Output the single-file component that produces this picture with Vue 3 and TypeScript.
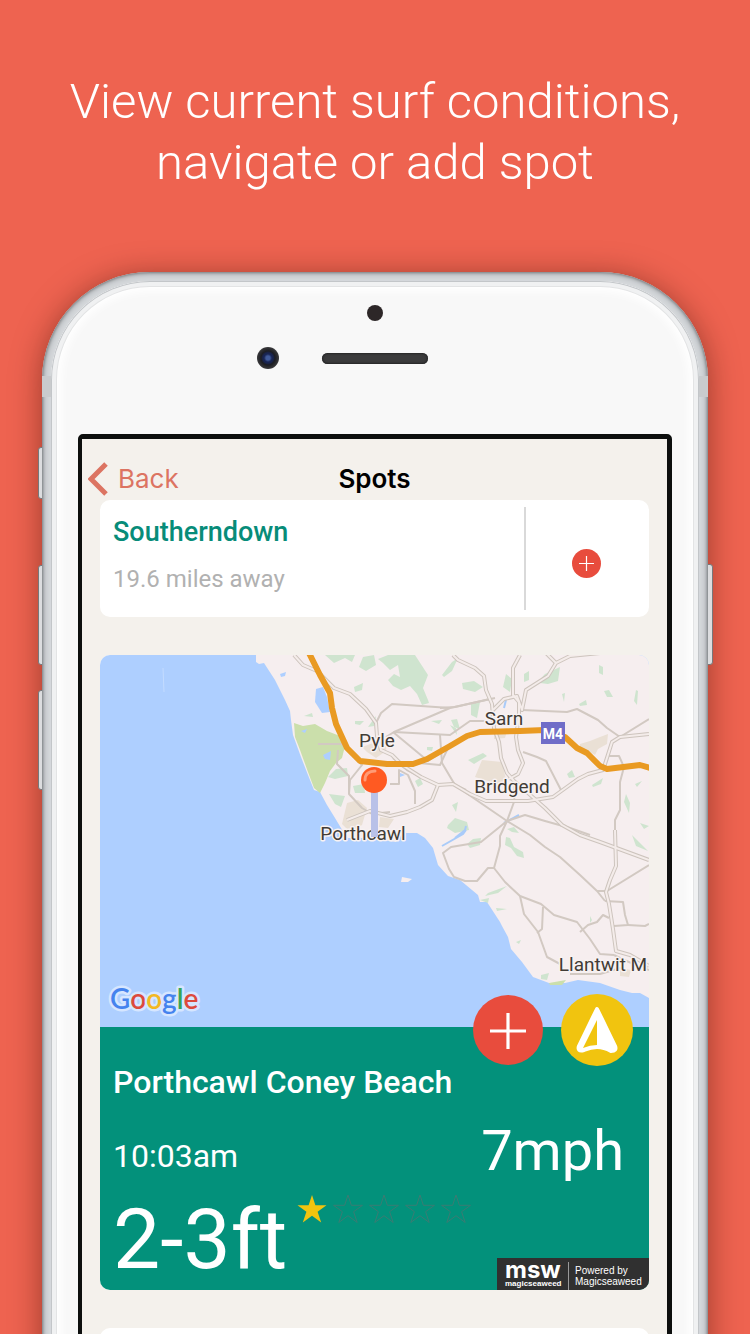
<script setup lang="ts">
interface Label {
  name: string
  x: number
  y: number
}

const labels: Label[] = [
  { name: 'Pyle', x: 377, y: 747 },
  { name: 'Sarn', x: 504, y: 725 },
  { name: 'Bridgend', x: 512, y: 793 },
  { name: 'Porthcawl', x: 363, y: 840 },
  { name: 'Llantwit M', x: 603, y: 971 },
]

const googleLetters = [
  { char: 'G', color: '#4583ee' },
  { char: 'o', color: '#dc4a3d' },
  { char: 'o', color: '#f3b823' },
  { char: 'g', color: '#4583ee' },
  { char: 'l', color: '#37a457' },
  { char: 'e', color: '#dc4a3d' },
]

const rating = 1
const maxRating = 5

const mainRoads: string[] = [
  'M294 655L303 665L317 671L327 681L334 688L350 694L366 709L376 723L377 736L381 750L392 755L402 765L421 777L438 785L453 784L470 794L486 801L528 801L553 797L578 779L588 774L603 770L606 761L612 742L620 737L649 734',
  'M453 655L458 660L475 668L484 676L486 690L492 704L494 728L499 742L501 758L507 773L514 781L528 793L545 808L562 825L580 835L600 842L649 860',
  'M520 655L513 668L513 695L519 702L519 715L516 737L518 750L523 763L518 774L509 779',
  'M493 710L504 699L517 696L522 710L526 690L548 676L556 663L570 656L610 652',
  'M556 663L545 652',
  'M347 820L370 811L390 816L407 812L420 807L432 800L438 785',
  'M615 830L616 866L610 880L606 892L609 904L613 929L616 951L630 955L649 966',
]

const minorRoads: string[] = [
  'M376 723L381 713L392 704L450 708L490 699',
  'M450 708L394 732L386 737',
  'M394 732L450 735L470 721L486 721',
  'M393 732L428 761L455 744',
  'M318 744L342 744L350 753L362 765L350 780L349 794',
  'M338 750L337 764L349 776L349 794L362 808L372 814L390 812',
  'M390 784L399 784L399 770L408 775L415 791L415 804',
  'M440 735L442 763L455 785L466 790',
  'M419 763L440 765L448 748',
  'M438 785L407 770L393 758',
  'M440 708L455 707L495 698',
  'M522 710L567 712L577 709L598 720L607 728L620 737L649 719',
  'M523 752L537 757L546 761L562 792',
  'M606 756L619 756L624 767L620 782L620 810L615 820L615 840',
  'M453 784L507 821L530 835L545 847L560 857L580 875L597 891L605 901',
  'M515 781L514 802L507 821L481 842L451 847L443 853L449 869L454 877L465 881L477 881L488 868L494 868L500 846L500 836L507 821',
  'M507 821L525 815L545 821L570 828L590 835',
  'M494 868L505 882L520 896L541 904L554 915L577 922L590 939L600 954L614 955',
  'M520 896L524 914L538 932L547 957L560 964',
  'M543 907L542 929L537 933',
  'M580 932L588 925L597 922L603 915L609 918',
  'M597 891L607 891L649 865',
  'M605 901L623 902L625 915L628 925L614 926',
  'M628 925L645 926L649 924',
  'M614 955L624 960L649 970M570 974L600 974L624 967',
]
</script>

<template>
  <main class="promo">
    <h1 class="headline">View current surf conditions,<br />navigate or add spot</h1>

    <div class="phone">
      <i class="key key-mute"></i>
      <i class="key key-up"></i>
      <i class="key key-down"></i>
      <i class="key key-power"></i>
      <div class="rim">
        <div class="face">
          <div class="sensors">
            <i class="proximity"></i>
            <div class="ear-row">
              <i class="camera"></i>
              <i class="speaker"></i>
            </div>
          </div>

          <div class="screen">
            <header class="nav">
              <button type="button" class="back">
                <svg width="20" height="34" viewBox="0 0 20 34" aria-hidden="true">
                  <path d="M18 2L3 17L18 32" fill="none" stroke="currentColor" stroke-width="5" />
                </svg>
                Back
              </button>
              <h2 class="nav-title">Spots</h2>
            </header>

            <div class="list">
              <article class="card spot">
                <div class="spot-text">
                  <h3 class="spot-name">Southerndown</h3>
                  <p class="spot-distance">19.6 miles away</p>
                </div>
                <div class="spot-action">
                  <button type="button" class="add-small" aria-label="Add Southerndown">
                    <svg width="29" height="29" viewBox="0 0 29 29">
                      <circle cx="14.5" cy="14.5" r="14.5" fill="#e84c3d" />
                      <path d="M7 14.5H22M14.5 7V22" stroke="#fff" stroke-width="1.2" />
                    </svg>
                  </button>
                </div>
              </article>

              <article class="card detail">
                <svg class="map" viewBox="100 655 549 372" role="img" aria-label="Map of Porthcawl">
                  <rect x="100" y="655" width="549" height="372" fill="#aecfff" />
                  <path
                    fill="#f6eeef"
                    d="M256 655V662L259 664L264 663L275 680L285 700L290 711L291 720L293 735L301 757L308 775L314 790L320 792L327 805L335 818L344 833L348 838L362 838L384 840L396 842L402 833L417 833L425 838L433 848L438 865L448 876L460 880L478 895L480 902L487 902L500 922L502 926L508 937L511 949L522 962L533 977L549 983L565 983L578 980L600 983L620 990L632 993L640 993L649 998V655Z"
                  />
                  <path fill="#f6eeef" d="M402 877L412 879L408 882L401 882Z" />
                  <path stroke="#c4dcff" fill="none" d="M163 668L164 692" />

                  <g fill="#cbdfab">
                    <path d="M294 723L303 726L315 724L327 731L340 736L345 746L342 758L336 763L330 771L325 783L320 793L314 788L308 772L300 750L295 737Z" />
                    <path d="M549 983L566 980L562 985L550 985Z" />
                  </g>
                  <g fill="#cfe4cf">
                    <path d="M325 655H355L352 662L345 658L334 663ZM363 657L374 655L376 665L366 671L359 667ZM378 659L388 655H415L428 675L423 688L428 700L429 703L422 705L417 694L410 686L401 690L393 686L388 680L394 674L400 677L398 665L390 670L383 663Z" />
                    <path d="M354 687L363 683L362 690L355 692ZM355 721L364 721L360 725L355 724ZM304 716L312 713L313 717ZM368 727L373 720L376 716L374 726ZM427 747L433 747L432 751L427 750ZM431 721L442 720L439 724Z" />
                    <path d="M328 777L336 769L347 768L348 776L335 779ZM353 786L364 784L365 793L355 793ZM329 794L345 796L341 807L335 804ZM415 781L420 778L423 784L418 787Z" />
                    <path d="M442 675L452 662L458 658L452 671L444 677ZM462 683L474 681L483 687L475 692L463 689ZM506 674L512 679L510 692L503 687ZM524 674L529 671L529 680L524 682ZM536 684L545 674L560 667L558 681L548 684L540 683ZM599 665L603 667L603 675L599 673ZM471 704L480 702L477 718L471 715ZM451 720L457 719L460 729L454 727Z" />
                    <path d="M604 691L609 690L613 697L607 697ZM636 690L638 691L637 705L634 701ZM579 704L586 700L587 705L580 706ZM562 694L565 693L564 702ZM450 725L456 728L457 735ZM468 760L483 753L487 756L474 764ZM567 774L572 770L575 777L569 778ZM592 785L603 778L601 784L593 787Z" />
                    <path d="M448 825L455 818L467 822L469 830L455 833L447 828ZM452 805L458 802L456 812ZM467 844L473 839L481 838L480 845L470 848ZM506 837L510 838L514 847L523 852L524 858L517 856L511 848L505 845ZM507 829L514 827L519 833L512 832ZM632 835L648 851L636 846ZM635 784L642 781L637 787ZM626 794L630 803L629 813L624 802ZM640 823L649 826L644 829ZM488 893L507 886L498 893L485 896ZM480 900L489 898L488 903ZM496 908L507 909L497 911ZM516 942L521 940L519 944ZM590 916L592 920L590 923ZM541 975L549 973L547 980L541 979ZM573 976L575 985Z" />
                  </g>
                  <g fill="#eae0d5">
                    <path d="M362 747L376 742L387 740L386 751L376 758L367 752Z" />
                    <path d="M347 803L358 800L367 808L362 825L350 832L342 824ZM380 817L394 819L388 828L379 827Z" />
                    <path d="M482 760L502 762L506 780L498 784L475 777ZM494 730L508 728L505 738L494 739Z" />
                    <path d="M580 744L590 741L600 737L608 734L607 744L598 749L595 755L588 751L580 749ZM540 732L550 730L551 740ZM620 968L631 970L629 977L620 976Z" />
                  </g>
                  <g fill="#aecfff">
                    <path d="M316 689L323 687L327 697L330 712L322 713L315 702Z" />
                    <path d="M280 674L286 672L285 676L281 677ZM323 755L331 751L330 760L325 759ZM301 731L307 729L305 733ZM400 773L405 775L400 777Z" />
                  </g>
                  <path d="M455 838L465 830L466 826M504 823L519 815M504 708L506 700M442 846L463 834L466 830" fill="none" stroke="#a9cbf9" stroke-width="2" />

                  <g fill="none" stroke="#d2c9c2" stroke-width="2" stroke-linejoin="round">
                    <path v-for="d in minorRoads" :key="d" :d="d" />
                  </g>
                  <g fill="none" stroke="#cdc4bd" stroke-width="4" stroke-linejoin="round">
                    <path v-for="d in mainRoads" :key="d" :d="d" />
                  </g>
                  <g fill="none" stroke="#f4ecea" stroke-width="2" stroke-linejoin="round">
                    <path v-for="d in mainRoads" :key="d" :d="d" />
                  </g>

                  <path
                    fill="none"
                    stroke="#e99a22"
                    stroke-width="6"
                    stroke-linejoin="round"
                    d="M309 653L320 675L330 693L332 708L336 724L347 748L360 761L387 764L413 764L427 759L450 746L467 736L480 732L520 731L545 730L565 737L577 748L587 753L600 766L607 769L640 765L650 768"
                  />

                  <g class="place">
                    <text v-for="l in labels" :key="l.name" :x="l.x" :y="l.y">{{ l.name }}</text>
                  </g>

                  <rect x="541" y="722" width="24" height="22" fill="#706dc8" />
                  <text class="shield" x="553" y="739">M4</text>

                  <rect x="371" y="790" width="7" height="47" fill="#b9c1e8" />
                  <circle cx="374" cy="780" r="13" fill="#ff5a22" />
                  <path d="M365 780C365 774 369 771 375 771" fill="none" stroke="#ff9b76" stroke-width="3" stroke-linecap="round" />

                  <text class="google" x="110" y="1009">
                    <tspan v-for="(g, i) in googleLetters" :key="i" :fill="g.color">{{ g.char }}</tspan>
                  </text>
                </svg>

                <div class="panel">
                  <div class="fabs">
                    <button type="button" class="fab" aria-label="Add spot">
                      <svg width="70" height="70" viewBox="0 0 70 70">
                        <circle cx="35" cy="35" r="35" fill="#e84c3d" />
                        <path d="M17 36H53M35 18V54" stroke="#fff" stroke-width="3.2" />
                      </svg>
                    </button>
                    <button type="button" class="fab" aria-label="Navigate to spot">
                      <svg width="72" height="72" viewBox="0 0 72 72">
                        <circle cx="36" cy="36" r="36" fill="#f1c40f" />
                        <path d="M36 15L54 52Q56 57 50 57Q43 53 36 53Q30 53 23 56Q16 58 18 52Z" fill="#fff" stroke="#fff" stroke-width="4" stroke-linejoin="round" />
                        <path d="M36 26V51Q29 51 22 54Z" fill="#f1c40f" />
                      </svg>
                    </button>
                  </div>

                  <h3 class="beach">Porthcawl Coney Beach</h3>
                  <div class="row">
                    <time class="time" datetime="10:03">10:03am</time>
                    <span class="wind">7mph</span>
                  </div>
                  <div class="surf">
                    <span class="height">2-3ft</span>
                    <div class="stars" role="img" :aria-label="`${rating} of ${maxRating} stars`">
                      <svg
                        v-for="n in maxRating"
                        :key="n"
                        :class="n <= rating ? 'star on' : 'star'"
                        width="30"
                        height="30"
                        viewBox="0 0 30 30"
                      >
                        <path d="M15 1L18.4 11.3H29.5L20.6 17.7L24.2 28.5L15 21.7L5.8 28.5L9.4 17.7L0.5 11.3H11.6Z" />
                      </svg>
                    </div>
                  </div>

                  <a href="#" class="credit">
                    <span class="logo">
                      <b class="logo-mark">msw</b>
                      <span class="logo-name">magicseaweed</span>
                    </span>
                    <span class="credit-text">Powered by<br />Magicseaweed</span>
                  </a>
                </div>
              </article>

              <article class="card upcoming"></article>
            </div>
          </div>
        </div>
      </div>
    </div>
  </main>
</template>

<style>
body {
  background: #ee6350;
}
</style>

<style scoped>
.promo {
  box-sizing: border-box;
  height: 100vh;
  overflow: hidden;
  padding: 71px 42px 0;
  background: #ee6350;
  font-family: Roboto, "Liberation Sans", sans-serif;
}

h1, h2, h3, p {
  margin: 0;
}

button {
  padding: 0;
  border: 0;
  background: none;
  font: inherit;
  cursor: pointer;
}

svg {
  display: block;
}

.headline {
  height: 201px;
  margin: 0 -20px;
  color: #fff;
  font-size: 49px;
  font-weight: 300;
  line-height: 61px;
  text-align: center;
}

.phone {
  position: relative;
  border-radius: 108px 108px 0 0;
  box-shadow: 0 4px 30px rgba(70, 20, 10, 0.5);
}

.key {
  position: absolute;
  left: -4px;
  width: 5px;
  box-sizing: border-box;
  border: 1px solid #77787b;
  border-radius: 3px 0 0 3px;
  background: #dcdddf;
}

.key-mute {
  top: 175px;
  height: 52px;
}

.key-up {
  top: 293px;
  height: 100px;
}

.key-down {
  top: 418px;
  height: 100px;
}

.key-power {
  top: 292px;
  right: -5px;
  left: auto;
  width: 6px;
  height: 101px;
  border-radius: 0 3px 3px 0;
}

.rim {
  position: relative;
  padding: 9px 9px 0;
  border-radius: 108px 108px 0 0;
  background: #d6d9dc;
  box-shadow: inset 0 0 3px 1px #7b7e81, inset 0 0 6px 3px #b4b8bb;
}

.rim::before {
  content: "";
  position: absolute;
  top: 104px;
  right: 0;
  left: 0;
  height: 21px;
  background: #c9cbcd;
}

.face {
  position: relative;
  padding: 0 27px;
  border-radius: 99px 99px 0 0;
  background: #f8f8f8;
  box-shadow: inset 0 0 0 1px #c3c6c9, inset 0 0 0 5px #f0f1f2, inset 0 0 0 6px #e3e4e5, inset 0 0 10px 10px #fff;
}

.sensors {
  height: 153px;
  display: flex;
  flex-direction: column;
  align-items: center;
  padding-top: 24px;
  box-sizing: border-box;
}

.proximity {
  width: 16px;
  height: 16px;
  border-radius: 50%;
  background: #2d2728;
}

.ear-row {
  display: grid;
  grid-template-columns: 1fr 106px 1fr;
  align-items: center;
  width: 100%;
  margin-top: 26px;
}

.camera {
  justify-self: end;
  width: 22px;
  height: 22px;
  margin-right: 43px;
  border-radius: 50%;
  background: radial-gradient(circle, #405a9a 0 2px, #182452 4px 5px, #1c1d22 7px, #3a3a3c 11px);
}

.speaker {
  height: 11px;
  border-radius: 6px;
  background: #3b3b3c;
  box-shadow: inset 0 0 2px 1px #262627;
}

.screen {
  border: 5px solid #0d0f0e;
  border-left-width: 4px;
  border-radius: 5px 5px 0 0;
  background: #f4f1ec;
}

.nav {
  display: grid;
  grid-template-columns: 1fr auto 1fr;
  align-items: center;
  height: 61px;
  padding: 18px 6px 0;
  box-sizing: border-box;
  font-family: Inter, "Liberation Sans", sans-serif;
  font-size: 26px;
  line-height: 34px;
}

.back {
  display: flex;
  align-items: center;
  justify-self: start;
  gap: 10px;
  color: #dc7462;
}

.nav-title {
  color: #000;
  font-size: 26px;
  font-weight: 600;
}

.list {
  display: grid;
  gap: 38px;
  padding: 0 18px;
}

.card {
  overflow: hidden;
  border-radius: 10px;
  background: #fff;
}

.spot {
  display: flex;
  align-items: center;
  height: 117px;
}

.spot-text {
  flex: 1;
  padding-left: 13px;
}

.spot-name {
  color: #078c79;
  font-size: 27px;
  font-weight: 500;
  line-height: 32px;
}

.spot-distance {
  margin-top: 15px;
  margin-bottom: 6px;
  color: #b1b1b1;
  font-size: 24px;
  line-height: 32px;
}

.spot-action {
  display: grid;
  place-items: center;
  box-sizing: border-box;
  width: 125px;
  height: 103px;
  padding: 9px 2px 0 0;
  border-left: 2px solid #d9d9d9;
}

.map {
  width: 100%;
  height: auto;
}

.place {
  fill: #423c36;
  stroke: #f8f2f2;
  stroke-width: 3px;
  stroke-linejoin: round;
  paint-order: stroke;
  font-size: 19px;
  text-anchor: middle;
}

.shield {
  fill: #fff;
  font-size: 14px;
  font-weight: 700;
  text-anchor: middle;
}

.google {
  stroke: #d6e6ff;
  stroke-width: 5px;
  stroke-linejoin: round;
  paint-order: stroke;
  font-family: Lato, "Liberation Sans", sans-serif;
  font-size: 28px;
  font-weight: 600;
}

.panel {
  position: relative;
  height: 263px;
  padding: 37px 13px 0;
  box-sizing: border-box;
  background: #03917b;
  color: #fff;
}

.fabs {
  position: absolute;
  top: -33px;
  right: 16px;
  display: flex;
  align-items: center;
  gap: 18px;
}

.beach {
  font-size: 32px;
  font-weight: 500;
  line-height: 36px;
}

.row {
  display: flex;
  align-items: center;
  justify-content: space-between;
  height: 60px;
  margin-top: 21px;
  padding-right: 12px;
}

.time {
  padding-top: 10px;
  font-size: 32px;
}

.wind {
  font-size: 56px;
}

.surf {
  display: flex;
  gap: 10px;
  height: 92px;
  margin-top: 13px;
}

.height {
  font-size: 84px;
  line-height: 92px;
}

.stars {
  display: flex;
  gap: 6px;
  height: 30px;
}

.star {
  fill: none;
  stroke: #3a7c73;
  stroke-width: 1px;
}

.star.on {
  fill: #f1c40f;
  stroke: none;
}

.credit {
  position: absolute;
  right: 0;
  bottom: 0;
  display: flex;
  align-items: center;
  width: 152px;
  height: 32px;
  padding: 4px 0 0 8px;
  box-sizing: border-box;
  background: #303030;
  color: #fff;
  font-family: "Liberation Sans", sans-serif;
  font-size: 10px;
  line-height: 11px;
  text-decoration: none;
}

.logo {
  display: grid;
  grid-template-rows: 17px 9px;
  width: 64px;
  height: 28px;
  box-sizing: border-box;
  border-right: 1px solid #999;
}

.logo-mark {
  font-family: Inter, sans-serif;
  font-size: 24px;
  font-weight: 700;
  line-height: 16px;
}

.logo-name {
  font-size: 8px;
  font-weight: 700;
  line-height: 9px;
}

.credit-text {
  padding-left: 6px;
}

.upcoming {
  height: 117px;
}
</style>
